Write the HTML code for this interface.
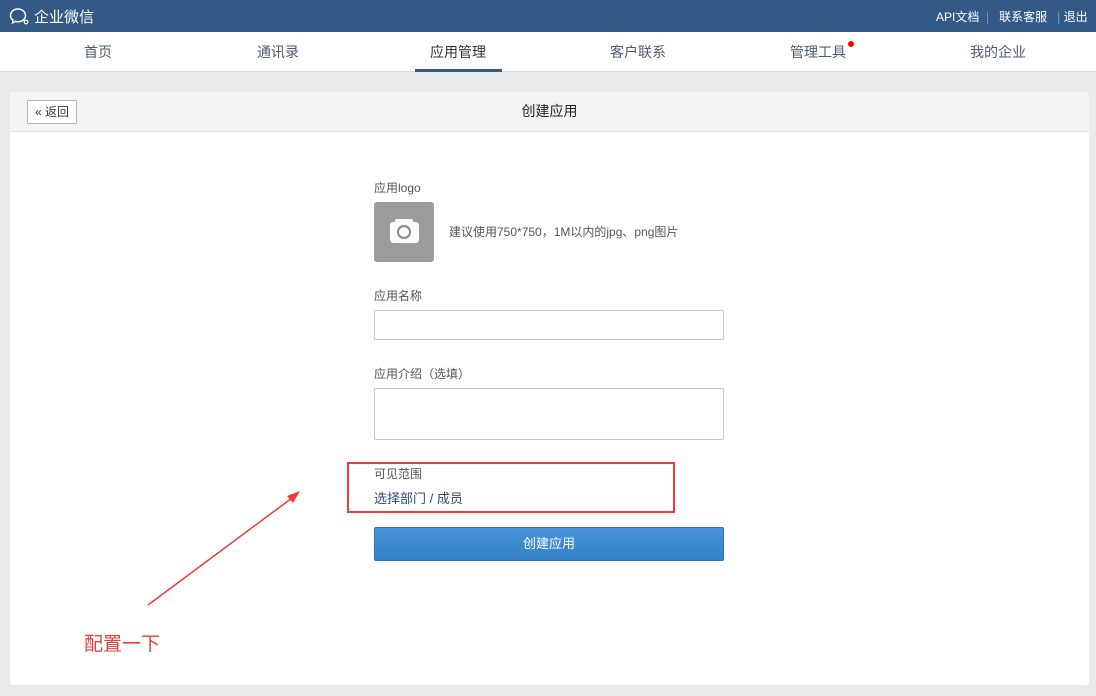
<!DOCTYPE html>
<html><head><meta charset="utf-8"><style>
*{margin:0;padding:0;box-sizing:border-box}
body{width:1096px;height:696px;background:#e9eaec;font-family:"Liberation Sans","Noto Sans CJK SC",sans-serif;position:relative;overflow:hidden;font-size:13px;color:#333}
.top{position:absolute;left:0;top:0;width:1096px;height:32px;background:#335a86;color:#fff}
.nav{position:absolute;left:0;top:32px;width:1096px;height:40px;background:#fff;border-bottom:1px solid #dcdcdc}
.nav span{position:absolute;top:10px;font-size:14px;color:#4a5c75}
.card{position:absolute;left:10px;top:92px;width:1079px;height:593px;background:#fff;border-radius:3px}
.hd{height:40px;background:#f4f4f4;border-bottom:1px solid #e2e2e2;border-radius:3px 3px 0 0;position:relative}
.lbl{position:absolute;left:374px;font-size:12px;color:#555}
.inp{position:absolute;left:374px;width:350px;border:1px solid #c8c8c8;border-radius:2px;background:#fff}
</style></head><body>
<div class="top">
<svg style="position:absolute;left:9px;top:7px" width="22" height="19" viewBox="0 0 22 19"><path d="M9 2C4.5 2 1.5 5 1.5 8.5c0 2 1 3.6 2.5 4.7L3.5 16l3-1.6c.8.2 1.6.3 2.5.3 4.5 0 7.5-3 7.5-6.2S13.5 2 9 2z" fill="none" stroke="#fff" stroke-width="1.5"/><circle cx="17" cy="15" r="1.8" fill="none" stroke="#fff" stroke-width="1.2"/></svg>
<span style="position:absolute;left:34px;top:6px;font-size:15px">企业微信</span>
<span style="position:absolute;left:936px;top:8px;font-size:12px;white-space:nowrap">API文档 <span style="color:#7a9cc0">&nbsp;|&nbsp;</span>&nbsp; 联系客服 &nbsp;&nbsp;<span style="color:#7a9cc0">|</span> 退出</span>
</div>
<div class="nav">
<span style="left:84px">首页</span><span style="left:257px">通讯录</span>
<span style="left:430px;color:#333">应用管理</span>
<div style="position:absolute;left:415px;top:37px;width:87px;height:3px;background:#335a86"></div>
<span style="left:790px">管理工具</span><span style="left:610px">客户联系</span>
<div style="position:absolute;left:848px;top:9px;width:6px;height:6px;border-radius:50%;background:#f00"></div>
<span style="left:970px">我的企业</span>
</div>
<div class="card">
<div class="hd">
<div style="position:absolute;left:17px;top:8px;width:50px;height:24px;border:1px solid #b5b5b5;background:#fff;border-radius:2px;font-size:12px;line-height:22px;text-align:center;color:#333">« 返回</div>
<div style="position:absolute;left:0;width:100%;top:9px;text-align:center;font-size:14px;color:#222">创建应用</div>
</div>
</div>
<div class="lbl" style="top:179px">应用logo</div>
<div style="position:absolute;left:374px;top:202px;width:60px;height:60px;background:#9b9b9b;border-radius:3px">
<div style="position:absolute;left:16px;top:20px;width:29px;height:21px;background:#fafafa;border-radius:3px"></div>
<div style="position:absolute;left:21px;top:17px;width:18px;height:5px;background:#fafafa;border-radius:2px"></div>
<div style="position:absolute;left:23px;top:23px;width:14px;height:14px;border:2px solid #8a8a8a;border-radius:50%"></div>
</div>
<div class="lbl" style="left:449px;top:223px">建议使用750*750，1M以内的jpg、png图片</div>
<div class="lbl" style="top:287px">应用名称</div>
<div class="inp" style="top:310px;height:30px"></div>
<div class="lbl" style="top:365px">应用介绍（选填）</div>
<div class="inp" style="top:388px;height:52px"></div>
<div style="position:absolute;left:347px;top:462px;width:328px;height:51px;border:2px solid #f23a3a"></div>
<div class="lbl" style="top:465px">可见范围</div>
<div style="position:absolute;left:374px;top:488px;font-size:13px;color:#2b4a78">选择部门 / 成员</div>
<div style="position:absolute;left:374px;top:527px;width:350px;height:34px;background:linear-gradient(#4a94d8,#3280c7);border:1px solid #2d74b8;border-radius:2px;color:#fff;text-align:center;line-height:32px;font-size:13px">创建应用</div>
<svg style="position:absolute;left:0;top:0" width="1096" height="696"><line x1="148" y1="605" x2="296" y2="495" stroke="#f03a3a" stroke-width="1.5"/><path d="M300 491 L287 496 L293 503 Z" fill="#f03a3a"/></svg>
<div style="position:absolute;left:84px;top:629px;font-size:19px;color:#f03a3a">配置一下</div>
</body></html>
